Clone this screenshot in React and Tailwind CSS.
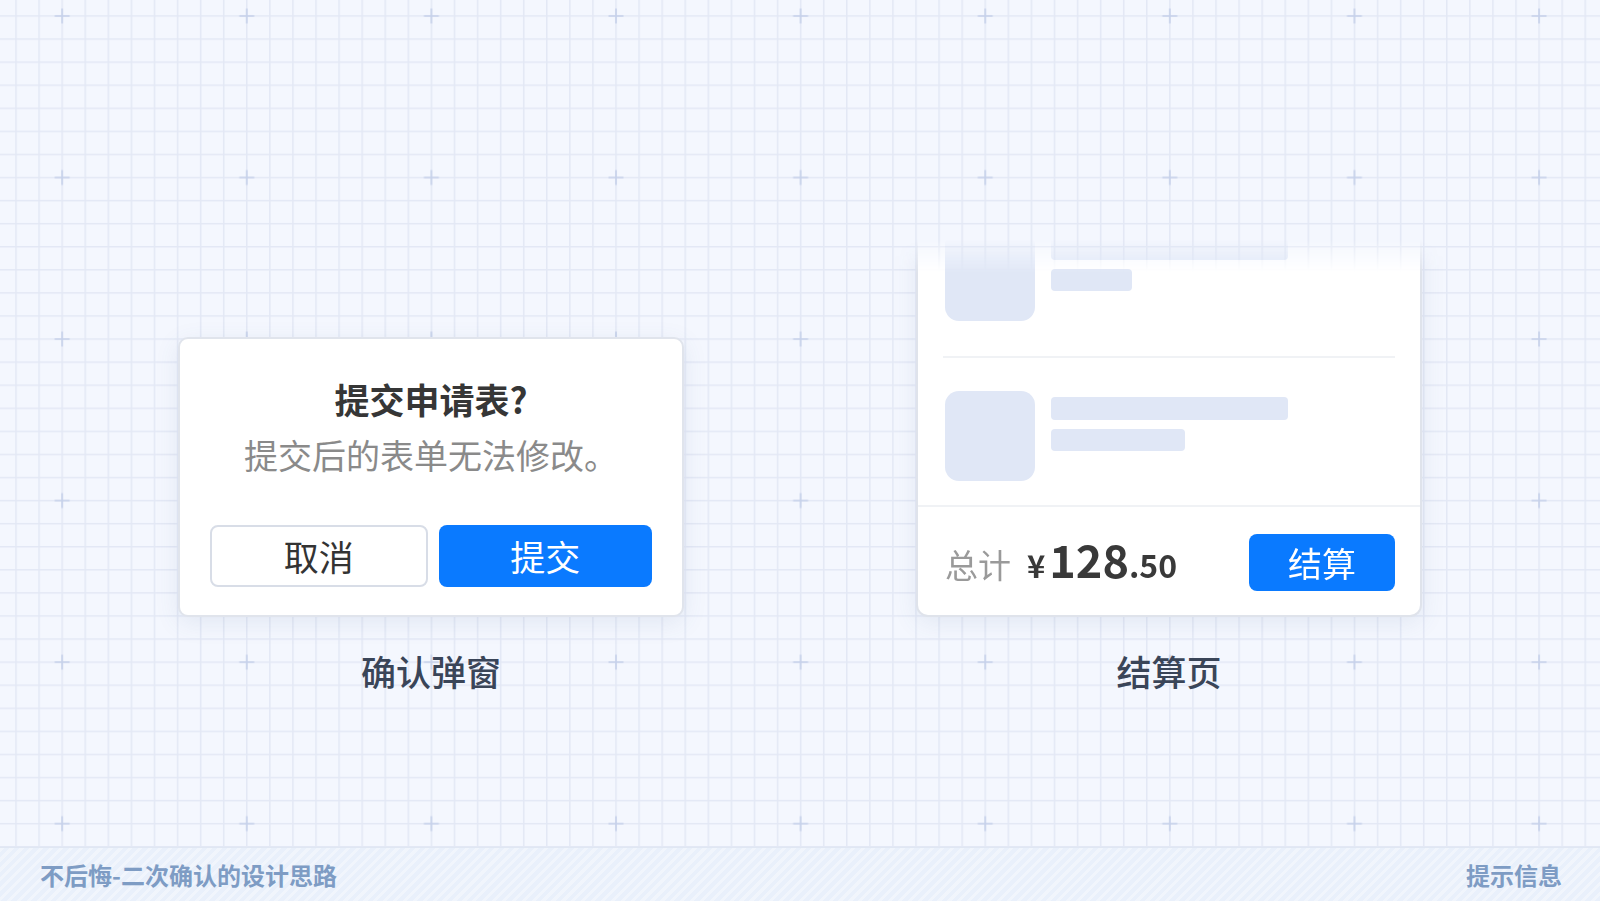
const FONT = "font-['Noto_Sans_CJK_SC','Noto_Sans',sans-serif]"

function GridBackdrop() {
  return (
    <svg className="absolute inset-0 h-full w-full" aria-hidden="true">
      <defs>
        <pattern id="grid" width="23.077" height="23.077" patternUnits="userSpaceOnUse" x="15.25" y="15.25">
          <path d="M0 0.75H23.077M0.75 0V23.077" stroke="#e3e8f5" strokeWidth="1.5" fill="none" />
        </pattern>
        <pattern id="plus" width="184.615" height="161.538" patternUnits="userSpaceOnUse" x="54.15" y="8">
          <path d="M0.5 8H15.5M8 0.5V15.5" stroke="#c6d1ea" strokeWidth="1.6" fill="none" />
        </pattern>
      </defs>
      <rect width="100%" height="100%" fill="#f4f7fe" />
      <rect width="100%" height="100%" fill="url(#grid)" />
      <rect width="100%" height="100%" fill="url(#plus)" />
    </svg>
  )
}

function ConfirmDialog() {
  return (
    <div className="w-[506px] rounded-[10px] border-2 border-[#e0e4ec] bg-white px-[30px] pt-[37px] pb-[28px] shadow-[0_6px_24px_rgba(70,95,150,0.10)]">
      <h3 className="text-center text-[35px] font-bold leading-[46px] text-[#363636]">提交申请表?</h3>
      <p className="mt-[10px] text-center text-[34px] leading-[46px] text-[#8a8a8a]">提交后的表单无法修改。</p>
      <div className="mt-[47px] flex gap-[11px]">
        <button className="h-[62px] flex-1 rounded-[8px] border-2 border-[#d8dde7] bg-white text-[35px] text-[#333]">取消</button>
        <button className="h-[62px] flex-1 rounded-[8px] bg-[#0a7aff] text-[35px] text-white">提交</button>
      </div>
    </div>
  )
}

function CartItem({ short }) {
  return (
    <div className="flex gap-4 px-[27px]">
      <div className="h-[90px] w-[90px] shrink-0 rounded-[14px] bg-[#e0e7f6]" />
      <div className="pt-1.5">
        <div className="h-[23px] w-[237px] rounded-[4px] bg-[#e0e7f6]" />
        <div className={`mt-[9px] h-[22px] rounded-[4px] bg-[#e0e7f6] ${short ? 'w-[81px]' : 'w-[134px]'}`} />
      </div>
    </div>
  )
}

function CheckoutCard() {
  return (
    <div className="-mx-6 -mb-6 px-6 pb-6 [mask-image:linear-gradient(to_bottom,transparent_0px,black_34px)]">
      <div className="h-[378px] w-[506px] overflow-hidden rounded-b-[12px] border-2 border-t-0 border-[#dfe3eb] bg-white shadow-[0_6px_24px_rgba(70,95,150,0.10)]">
        <div className="-mt-2">
          <CartItem short />
        </div>
        <div className="mx-[25px] mt-[35px] h-[2px] bg-[#f0f2f5]" />
        <div className="mt-[33px]">
          <CartItem />
        </div>
        <div className="mt-6 h-[2px] bg-[#f0f2f5]" />
        <div className="flex items-center justify-between pl-[27px] pr-[25px] pt-[27px]">
          <div className="flex items-baseline text-[#393939]">
            <span className="text-[33px] text-[#9a9a9a]">总计</span>
            <span className="ml-4 text-[31px] font-bold">¥</span>
            <span className="ml-[4px] text-[45px] font-bold leading-none">128</span>
            <span className="text-[32px] font-bold">.50</span>
          </div>
          <button className="h-[57px] w-[146px] rounded-[8px] bg-[#0a7aff] text-[34px] text-white">结算</button>
        </div>
      </div>
    </div>
  )
}

export default function App() {
  return (
    <div className={`relative flex h-[901px] w-[1600px] flex-col overflow-hidden ${FONT}`}>
      <GridBackdrop />
      <main className="relative flex flex-1 items-start justify-center gap-[232px] pt-[238px]">
        <div className="flex h-[458px] flex-col items-center justify-end">
          <ConfirmDialog />
          <div className="mt-[28px] text-[35px] font-medium leading-[51px] text-[#3a4558]">确认弹窗</div>
        </div>
        <div className="flex h-[458px] flex-col items-center justify-end">
          <CheckoutCard />
          <div className="mt-[28px] text-[35px] font-medium leading-[51px] text-[#3a4558]">结算页</div>
        </div>
      </main>
      <footer className="relative flex h-[54px] items-center justify-between border-t border-[#e0e7f3] bg-[#e9f0fb] bg-[repeating-linear-gradient(135deg,rgba(255,255,255,0.35)_0px,rgba(255,255,255,0.35)_3px,transparent_3px,transparent_7px)] pl-10 pr-[38px]">
        <span className="text-[24px] font-bold text-[#7e9cc4]">不后悔-二次确认的设计思路</span>
        <span className="text-[24px] font-bold text-[#7e9cc4]">提示信息</span>
      </footer>
    </div>
  )
}
